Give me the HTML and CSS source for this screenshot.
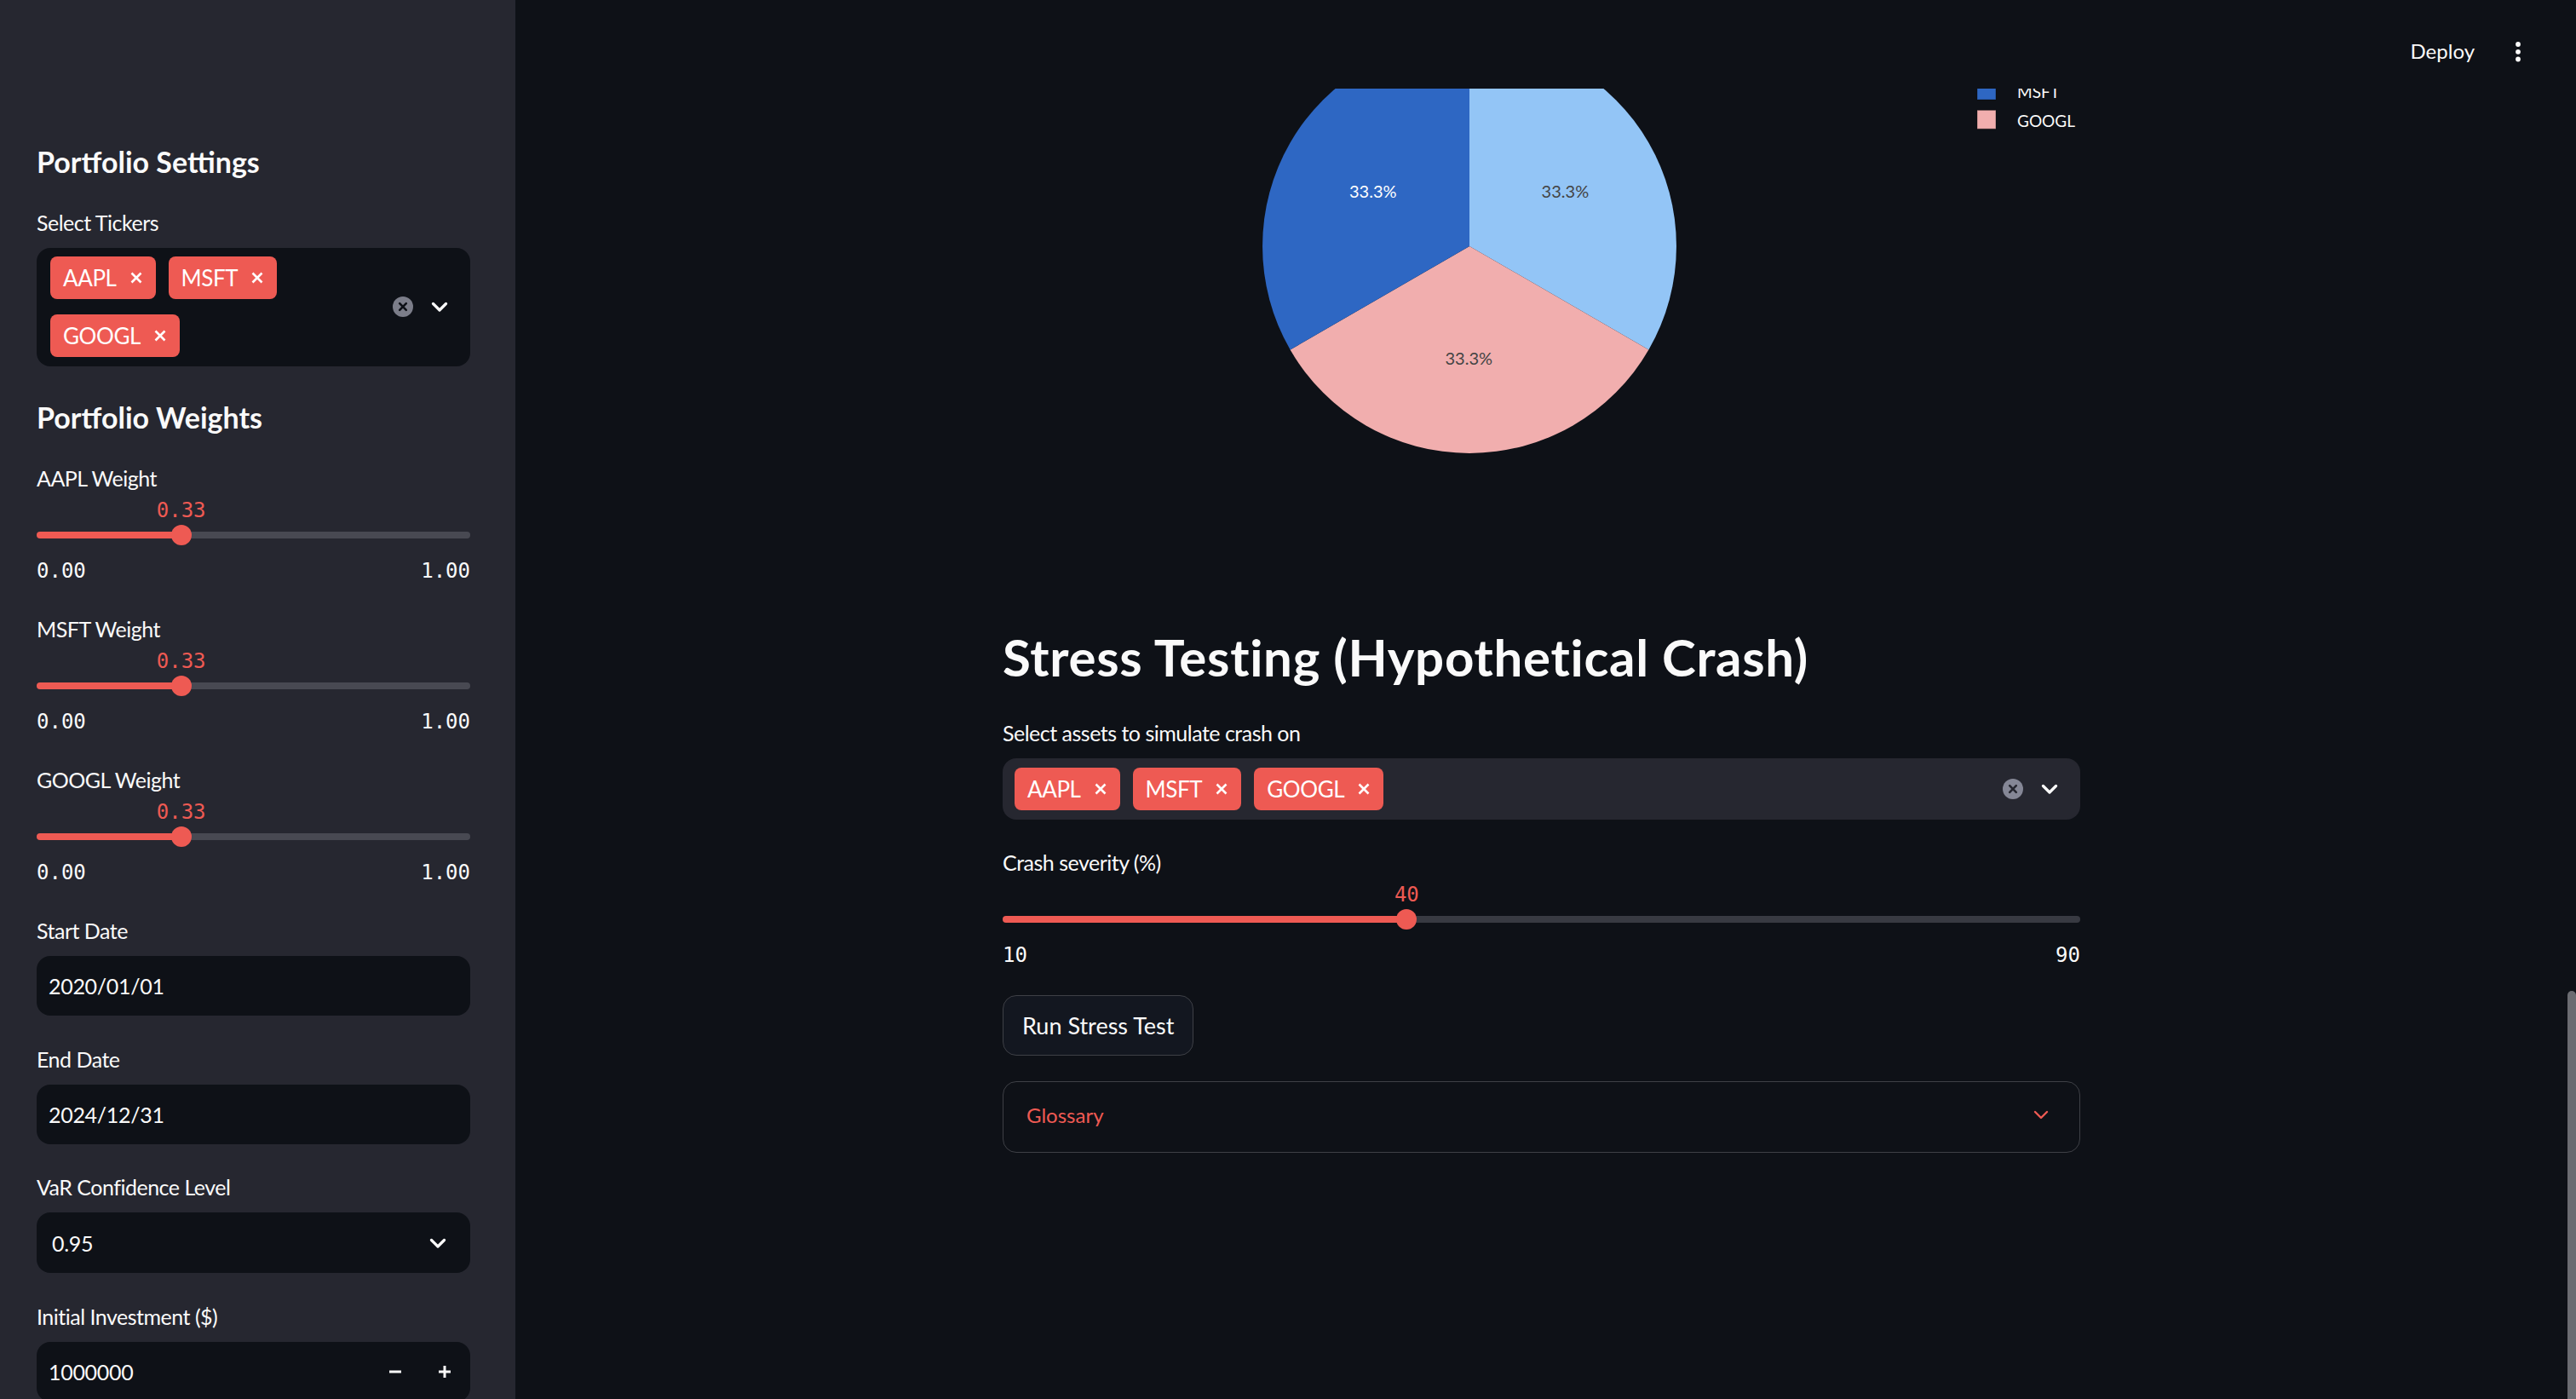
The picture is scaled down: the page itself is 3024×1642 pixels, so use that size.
FILE: index.html
```html
<!DOCTYPE html>
<html lang="en">
<head>
<meta charset="utf-8">
<title>Portfolio Risk Dashboard</title>
<link rel="stylesheet" href="styles.css">
</head>
<body>
<div class="app">
  <aside class="sidebar">
    <h2 class="side-h">Portfolio Settings</h2>
    <div class="field field-ms">
      <div class="lbl">Select Tickers</div>
      <div class="ms ms-side">
        <div class="tags">
          <span class="tag">AAPL<svg class="tag-x" viewBox="0 0 14 14"><path d="M1.5 1.5L12.5 12.5M12.5 1.5L1.5 12.5"/></svg></span>
          <span class="tag">MSFT<svg class="tag-x" viewBox="0 0 14 14"><path d="M1.5 1.5L12.5 12.5M12.5 1.5L1.5 12.5"/></svg></span>
          <span class="tag">GOOGL<svg class="tag-x" viewBox="0 0 14 14"><path d="M1.5 1.5L12.5 12.5M12.5 1.5L1.5 12.5"/></svg></span>
        </div>
        <div class="ms-icons">
          <svg class="clear" viewBox="0 0 24 24"><circle cx="12" cy="12" r="12"/><path d="M8.2 8.2L15.8 15.8M15.8 8.2L8.2 15.8"/></svg>
          <svg class="chev" viewBox="0 0 20 12"><path d="M2.5 2.5L10 10L17.5 2.5"/></svg>
        </div>
      </div>
    </div>

    <h2 class="side-h">Portfolio Weights</h2>
    <div class="slider-field" style="--p:33.33%">
      <div class="lbl lbl-slider">AAPL Weight</div>
      <div class="val-row"><span class="val">0.33</span></div>
      <div class="rail"><span class="thumb"></span></div>
      <div class="ticks"><span>0.00</span><span>1.00</span></div>
    </div>
    <div class="slider-field" style="--p:33.33%">
      <div class="lbl lbl-slider">MSFT Weight</div>
      <div class="val-row"><span class="val">0.33</span></div>
      <div class="rail"><span class="thumb"></span></div>
      <div class="ticks"><span>0.00</span><span>1.00</span></div>
    </div>
    <div class="slider-field" style="--p:33.33%">
      <div class="lbl lbl-slider">GOOGL Weight</div>
      <div class="val-row"><span class="val">0.33</span></div>
      <div class="rail"><span class="thumb"></span></div>
      <div class="ticks"><span>0.00</span><span>1.00</span></div>
    </div>

    <div class="field">
      <div class="lbl">Start Date</div>
      <div class="inp">2020/01/01</div>
    </div>
    <div class="field">
      <div class="lbl">End Date</div>
      <div class="inp">2024/12/31</div>
    </div>
    <div class="field">
      <div class="lbl">VaR Confidence Level</div>
      <div class="inp sel"><span>0.95</span><svg class="chev" viewBox="0 0 20 12"><path d="M2.5 2.5L10 10L17.5 2.5"/></svg></div>
    </div>
    <div class="field">
      <div class="lbl">Initial Investment ($)</div>
      <div class="inp num"><span>1000000</span>
        <svg class="step step-minus" viewBox="0 0 14 14"><path d="M0 7H14"/></svg>
        <svg class="step" viewBox="0 0 14 14"><path d="M0 7H14M7 0V14"/></svg>
      </div>
    </div>
  </aside>

  <main class="main">
    <div class="content">
      <div class="col">
        <svg class="chart" width="1265" height="700" viewBox="0 0 1265 700">
          <path d="M548 289L548 46A243 243 0 0 1 758.4 410.5Z" fill="#93c5f6"/>
          <path d="M548 289L758.4 410.5A243 243 0 0 1 337.6 410.5Z" fill="#f1aeae"/>
          <path d="M548 289L337.6 410.5A243 243 0 0 1 548 46Z" fill="#2e67c3"/>
          <text class="pl pl-light" x="434.8" y="232">33.3%</text>
          <text class="pl pl-dark" x="660.4" y="232">33.3%</text>
          <text class="pl pl-dark" x="547.3" y="428">33.3%</text>
          <rect class="lg-sq" x="1144" y="60.7" width="22" height="22" fill="#93c5f6"/>
          <text class="lg" x="1191" y="80.4">AAPL</text>
          <rect class="lg-sq" x="1144" y="95" width="22" height="22" fill="#2e67c3"/>
          <text class="lg" x="1191" y="114.7">MSFT</text>
          <rect class="lg-sq" x="1144" y="129.3" width="22" height="22" fill="#f1aeae"/>
          <text class="lg" x="1191" y="149">GOOGL</text>
        </svg>

        <h2 class="title">Stress Testing (Hypothetical Crash)</h2>

        <div class="field">
          <div class="lbl">Select assets to simulate crash on</div>
          <div class="ms ms-main">
            <div class="tags">
              <span class="tag">AAPL<svg class="tag-x" viewBox="0 0 14 14"><path d="M1.5 1.5L12.5 12.5M12.5 1.5L1.5 12.5"/></svg></span>
              <span class="tag">MSFT<svg class="tag-x" viewBox="0 0 14 14"><path d="M1.5 1.5L12.5 12.5M12.5 1.5L1.5 12.5"/></svg></span>
              <span class="tag">GOOGL<svg class="tag-x" viewBox="0 0 14 14"><path d="M1.5 1.5L12.5 12.5M12.5 1.5L1.5 12.5"/></svg></span>
            </div>
            <div class="ms-icons">
              <svg class="clear" viewBox="0 0 24 24"><circle cx="12" cy="12" r="12"/><path d="M8.2 8.2L15.8 15.8M15.8 8.2L8.2 15.8"/></svg>
              <svg class="chev" viewBox="0 0 20 12"><path d="M2.5 2.5L10 10L17.5 2.5"/></svg>
            </div>
          </div>
        </div>

        <div class="slider-field" style="--p:37.5%">
          <div class="lbl lbl-slider">Crash severity (%)</div>
          <div class="val-row"><span class="val">40</span></div>
          <div class="rail"><span class="thumb"></span></div>
          <div class="ticks"><span>10</span><span>90</span></div>
        </div>

        <div class="btn-row"><button class="btn">Run Stress Test</button></div>

        <div class="exp">
          <span>Glossary</span>
          <svg class="exp-chev" viewBox="0 0 18 11"><path d="M2 2L9 9L16 2"/></svg>
        </div>
      </div>
    </div>
    <div class="scrollbar"><div class="sb-space"></div><div class="sb-thumb"></div></div>
  </main>

  <header class="topbar">
    <span class="deploy">Deploy</span>
    <svg class="kebab" viewBox="0 0 6 24"><circle cx="3" cy="3" r="2.9"/><circle cx="3" cy="11.8" r="2.9"/><circle cx="3" cy="20.5" r="2.9"/></svg>
  </header>
</div>
</body>
</html>
```

FILE: styles.css
```css
:root {
  --red: #ee5a53;
  --text: #fafafa;
  --bg: #0e1117;
  --panel: #262730;
}

html, body {
  margin: 0;
  height: 100%;
  overflow: hidden;
  background: var(--bg);
}

body {
  font-family: Lato, "Noto Sans", sans-serif;
  color: var(--text);
}

.app {
  display: flex;
  height: 100vh;
  position: relative;
}

/* ---------- Sidebar ---------- */
.sidebar {
  width: 605px;
  flex: none;
  box-sizing: border-box;
  background: var(--panel);
  padding: 168px 53px 0 43px;
  overflow: hidden;
  --rail: #484952;
  --field: var(--bg);
}

.side-h {
  margin: 0 0 31px;
  font-size: 34px;
  line-height: 44px;
  font-weight: 700;
}

.lbl {
  font-size: 25px;
  letter-spacing: -0.5px;
  line-height: 36px;
  margin-bottom: 12px;
  white-space: nowrap;
}

.lbl-slider {
  margin-bottom: 6px;
}

.field {
  margin-bottom: 32.5px;
}

.field-ms {
  margin-bottom: 38px;
}

/* ---------- Multiselect ---------- */
.ms {
  display: flex;
  align-items: center;
  border-radius: 16px;
}

.ms-side {
  background: var(--bg);
  padding: 10px 26px 11px 16px;
}

.ms-side .tags {
  max-width: 330px;
}

.ms-main {
  background: var(--panel);
  padding: 11px 26px 11px 14px;
}

.tags {
  display: flex;
  flex-wrap: wrap;
  gap: 18px 15px;
  flex: 1;
}

.tag {
  display: inline-flex;
  align-items: center;
  height: 50px;
  box-sizing: border-box;
  padding: 0 16px 0 15px;
  background: var(--red);
  border-radius: 8px;
  font-size: 26px;
  letter-spacing: -0.4px;
  color: #fff;
  gap: 16px;
}

.tag-x {
  width: 14px;
  height: 14px;
  fill: none;
  stroke: #fff;
  stroke-width: 2.6;
}

.ms-icons {
  display: flex;
  align-items: center;
  gap: 21px;
  margin-left: auto;
}

.clear {
  width: 24px;
  height: 24px;
}

.clear circle {
  fill: #858796;
}

.ms-side .clear circle {
  fill: #7b7d89;
}

.clear path {
  stroke: var(--panel);
  stroke-width: 2.6;
  stroke-linecap: round;
}

.ms-side .clear path {
  stroke: var(--bg);
}

.chev {
  width: 20px;
  height: 12px;
  fill: none;
  stroke: var(--text);
  stroke-width: 3.2;
  stroke-linecap: round;
  stroke-linejoin: round;
}

/* ---------- Slider ---------- */
.slider-field {
  margin-bottom: 36px;
}

.val-row {
  position: relative;
  height: 28px;
}

.val {
  position: absolute;
  left: var(--p);
  transform: translateX(-50%);
  font-family: "DejaVu Sans Mono", "Liberation Mono", monospace;
  font-size: 24px;
  line-height: 28px;
  color: var(--red);
  white-space: nowrap;
}

.rail {
  position: relative;
  height: 24px;
  margin-top: 3px;
}

.rail::before {
  content: "";
  position: absolute;
  left: 0;
  right: 0;
  top: 8px;
  height: 8px;
  border-radius: 4px;
  background: linear-gradient(90deg, var(--red) var(--p), var(--rail) var(--p));
}

.thumb {
  position: absolute;
  top: 0;
  left: var(--p);
  width: 24px;
  height: 24px;
  margin-left: -12px;
  border-radius: 50%;
  background: var(--red);
}

.ticks {
  display: flex;
  justify-content: space-between;
  margin-top: 16px;
  font-family: "DejaVu Sans Mono", "Liberation Mono", monospace;
  font-size: 24px;
  line-height: 28px;
}

/* ---------- Inputs ---------- */
.inp {
  display: flex;
  align-items: center;
  height: 70px;
  box-sizing: border-box;
  padding: 0 14px;
  background: var(--field);
  border-radius: 16px;
  font-size: 25px;
  letter-spacing: -0.3px;
}

.sel {
  height: 71px;
  padding: 0 28px 0 18px;
  justify-content: space-between;
}

.num {
  padding-right: 23px;
}

.step {
  width: 14px;
  height: 14px;
  fill: none;
  stroke: var(--text);
  stroke-width: 3;
  flex: none;
}

.step-minus {
  margin-left: auto;
  margin-right: 44px;
}

/* ---------- Main ---------- */
.main {
  flex: 1;
  display: flex;
  min-width: 0;
  --rail: #383a42;
}

.content {
  flex: 1;
  display: flex;
  justify-content: center;
}

.col {
  width: 1265px;
  flex: none;
}

.chart {
  display: block;
}

.pl {
  font-family: Lato, "Noto Sans", sans-serif;
  font-size: 20px;
  text-anchor: middle;
}

.pl-light {
  fill: #ffffff;
}

.pl-dark {
  fill: #444444;
}

.lg {
  font-family: Lato, "Noto Sans", sans-serif;
  font-size: 19px;
  fill: var(--text);
}

.lg-sq {
  stroke: rgba(0, 0, 0, 0.35);
  stroke-width: 1;
}

.title {
  margin: 33px 0 33px;
  font-size: 60px;
  letter-spacing: 0.7px;
  line-height: 76px;
  font-weight: 700;
  white-space: nowrap;
}

.col .field {
  margin-bottom: 31.5px;
}

.col .slider-field {
  margin-bottom: 0;
}

.btn-row {
  margin-top: 33.8px;
}

.btn {
  display: inline-flex;
  align-items: center;
  height: 71px;
  box-sizing: border-box;
  padding: 0 22px;
  border: 1px solid #3e4046;
  border-radius: 16px;
  background: #131720;
  color: var(--text);
  font-family: Lato, "Noto Sans", sans-serif;
  font-size: 27px;
}

.exp {
  margin-top: 30px;
  height: 84px;
  box-sizing: border-box;
  display: flex;
  align-items: center;
  justify-content: space-between;
  padding: 0 36px 5px 27px;
  border: 1px solid #3e4046;
  border-radius: 16px;
  color: var(--red);
  font-size: 24px;
}

.exp-chev {
  width: 18px;
  height: 11px;
  fill: none;
  stroke: var(--red);
  stroke-width: 2.4;
  stroke-linecap: round;
  stroke-linejoin: round;
}

/* ---------- Scrollbar ---------- */
.scrollbar {
  width: 10px;
  flex: none;
  display: flex;
  flex-direction: column;
}

.sb-space {
  height: 1163px;
  flex: none;
}

.sb-thumb {
  flex: 1;
  background: #6b6c72;
  border-radius: 5px 5px 0 0;
}

/* ---------- Header ---------- */
.topbar {
  position: absolute;
  top: 0;
  left: 605px;
  right: 0;
  height: 104px;
  box-sizing: border-box;
  background: var(--bg);
  display: flex;
  justify-content: flex-end;
  align-items: flex-start;
  padding: 43.7px 65px 0 0;
}

.deploy {
  font-size: 24px;
  line-height: 32px;
}

.kebab {
  width: 6px;
  height: 24px;
  margin: 5.3px 0 0 48px;
  fill: var(--text);
}
```
